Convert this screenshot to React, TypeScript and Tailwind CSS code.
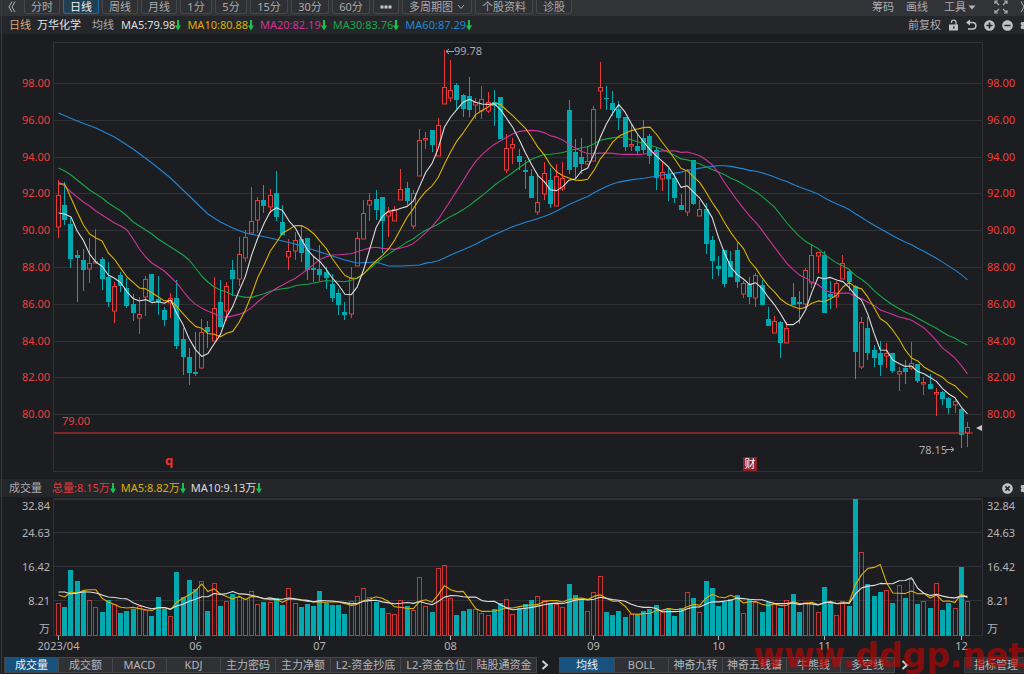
import type { ReactNode } from "react";
import { FaCog, FaPlusCircle, FaMinusCircle, FaTimesCircle } from "react-icons/fa";

type Candle = [kind: "r" | "t", high: number, top: number, bottom: number, low: number];

const FIRST_X = 58;
const STEP = 6.226;
const RED = "#e83a3a";
const TEAL = "#00a8b0";

const candles: Candle[] = [
  ["r", 180, 195, 227, 238], ["t", 182, 205, 220, 225], ["t", 218, 224, 259, 268], ["t", 250, 255, 258, 302],
  ["t", 249, 260, 270, 291], ["r", 238, 263, 269, 283], ["r", 229, 261, 263, 263], ["t", 257, 259, 279, 290],
  ["t", 262, 277, 302, 307], ["r", 282, 286, 311, 323], ["t", 272, 275, 286, 292], ["t", 278, 288, 306, 308],
  ["t", 294, 304, 313, 321], ["r", 297, 314, 318, 334], ["r", 276, 279, 297, 316], ["t", 274, 274, 301, 301],
  ["t", 276, 299, 302, 315], ["t", 307, 310, 320, 326], ["r", 293, 298, 303, 318], ["t", 280, 298, 346, 349],
  ["t", 328, 339, 357, 375], ["t", 348, 357, 373, 385], ["t", 332, 372, 374, 376], ["r", 319, 332, 368, 369],
  ["t", 321, 327, 332, 348], ["r", 277, 308, 341, 341], ["t", 280, 302, 327, 327], ["r", 282, 286, 311, 321],
  ["t", 260, 270, 279, 296], ["r", 237, 254, 279, 286], ["r", 230, 237, 258, 262], ["r", 187, 221, 233, 233],
  ["r", 197, 200, 220, 233], ["t", 185, 200, 206, 213], ["r", 189, 195, 207, 213], ["t", 171, 193, 217, 221],
  ["t", 205, 222, 235, 235], ["r", 239, 251, 257, 270], ["r", 232, 240, 251, 260], ["t", 226, 239, 253, 262],
  ["t", 238, 238, 270, 280], ["t", 256, 268, 270, 282], ["t", 245, 269, 275, 281], ["t", 267, 272, 278, 289],
  ["t", 274, 284, 298, 302], ["t", 289, 293, 305, 315], ["t", 302, 312, 315, 320], ["r", 267, 278, 314, 318],
  ["r", 232, 238, 266, 266], ["r", 200, 213, 239, 239], ["r", 193, 200, 205, 221], ["t", 190, 199, 210, 220],
  ["t", 197, 197, 221, 253], ["r", 207, 212, 216, 237], ["r", 206, 209, 221, 221], ["r", 169, 189, 200, 200],
  ["t", 182, 188, 201, 205], ["r", 190, 193, 226, 229], ["r", 129, 140, 176, 176], ["r", 132, 138, 140, 149],
  ["t", 130, 130, 145, 152], ["r", 118, 125, 156, 156], ["r", 50, 87, 104, 104], ["r", 60, 90, 98, 102],
  ["t", 83, 85, 100, 109], ["t", 94, 95, 109, 117], ["t", 77, 96, 110, 117], ["r", 98, 102, 105, 119],
  ["r", 86, 99, 111, 119], ["r", 92, 102, 111, 113], ["t", 90, 102, 106, 126], ["t", 97, 97, 139, 139],
  ["r", 134, 148, 170, 173], ["r", 138, 144, 148, 164], ["t", 149, 156, 162, 170], ["t", 160, 170, 172, 189],
  ["t", 169, 176, 198, 198], ["r", 175, 202, 212, 215], ["r", 162, 173, 194, 200], ["t", 168, 180, 204, 208],
  ["r", 164, 176, 206, 206], ["r", 162, 178, 189, 191], ["t", 100, 110, 170, 174], ["t", 139, 152, 167, 178],
  ["t", 138, 157, 164, 174], ["r", 146, 161, 164, 165], ["r", 106, 109, 161, 161], ["r", 62, 87, 91, 109],
  ["t", 86, 98, 99, 110], ["t", 91, 103, 110, 116], ["t", 101, 109, 118, 130], ["t", 117, 117, 147, 151],
  ["r", 125, 144, 146, 151], ["t", 135, 146, 151, 154], ["t", 120, 138, 150, 154], ["t", 134, 136, 156, 164],
  ["t", 147, 150, 178, 190], ["r", 162, 172, 179, 191], ["t", 168, 174, 179, 201], ["t", 173, 178, 198, 203],
  ["t", 194, 205, 210, 210], ["r", 169, 170, 212, 216], ["t", 160, 160, 204, 205], ["r", 200, 209, 216, 216],
  ["t", 203, 209, 244, 254], ["t", 236, 240, 261, 279], ["t", 256, 266, 269, 276], ["t", 250, 250, 284, 287],
  ["t", 251, 261, 277, 277], ["t", 242, 250, 282, 288], ["r", 281, 283, 294, 298], ["t", 277, 284, 297, 304],
  ["r", 273, 275, 298, 307], ["t", 280, 285, 305, 305], ["t", 307, 319, 326, 326], ["r", 316, 321, 333, 333],
  ["t", 321, 322, 343, 358], ["r", 322, 328, 343, 343], ["t", 283, 297, 305, 305], ["t", 291, 302, 304, 324],
  ["r", 268, 270, 304, 308], ["r", 244, 255, 283, 288], ["r", 252, 252, 256, 273], ["t", 251, 255, 313, 313],
  ["t", 281, 294, 297, 309], ["r", 281, 283, 297, 308], ["r", 255, 263, 279, 279], ["t", 269, 271, 282, 291],
  ["t", 285, 286, 352, 379], ["r", 317, 322, 367, 369], ["t", 317, 328, 353, 360], ["t", 345, 350, 358, 367],
  ["t", 341, 353, 365, 376], ["r", 343, 353, 356, 368], ["t", 353, 353, 371, 373], ["r", 367, 371, 374, 391],
  ["t", 360, 368, 372, 384], ["r", 342, 363, 368, 370], ["t", 364, 364, 381, 383], ["r", 377, 382, 384, 395],
  ["t", 374, 384, 389, 389], ["r", 388, 392, 394, 416], ["t", 391, 392, 399, 405], ["t", 397, 398, 408, 414],
  ["r", 398, 401, 405, 413], ["t", 408, 409, 435, 448], ["r", 422, 427, 433, 447],
];

const volumes: number[] = [
  603, 607, 570, 581, 591, 600, 607, 612, 600, 604, 613, 611, 609, 606, 610, 616, 597, 609, 616, 572, 597, 580, 589,
  581, 611, 583, 606, 601, 594, 597, 599, 591, 604, 602, 602, 598, 605, 588, 603, 607, 604, 606, 591, 603, 605, 605,
  614, 601, 596, 588, 597, 602, 608, 613, 614, 600, 606, 610, 577, 606, 612, 568, 565, 598, 615, 611, 609, 609, 613,
  615, 609, 603, 599, 614, 608, 604, 600, 596, 600, 603, 604, 607, 584, 595, 600, 611, 592, 576, 612, 615, 611, 617,
  614, 615, 611, 609, 605, 610, 608, 616, 608, 592, 598, 612, 581, 588, 606, 602, 599, 595, 613, 599, 602, 612, 602,
  604, 608, 600, 594, 612, 602, 603, 612, 587, 602, 615, 601, 606, 499, 552, 584, 596, 592, 590, 603, 585, 598, 579,
  604, 601, 608, 583, 610, 603, 608, 567, 601,
];

const closes = candles.map(([kind, , top, bottom]) => (kind === "r" ? top : bottom));
const xAt = (i: number) => FIRST_X + STEP * i;
const columnAt = (i: number) => Math.round(xAt(i)) + 0.5;

/** Moving average polyline; `lead` gives [index, y] anchors for the days before a full window exists. */
function averageLine(values: number[], size: number, lead: [number, number][]) {
  const points = lead.map(([i, y]) => `${(xAt(i) + 0.5).toFixed(1)},${y}`);
  for (let i = size - 1; i < values.length; i++) {
    const sum = values.slice(i - size + 1, i + 1).reduce((a, b) => a + b, 0);
    points.push(`${(xAt(i) + 0.5).toFixed(1)},${(sum / size).toFixed(1)}`);
  }
  return points.join(" ");
}

const indexed = (ys: number[]) => ys.map((y, i): [number, number] => [i, y]);

const priceLines = [
  {
    color: "#1f87d8",
    points: averageLine(closes, 60, [
      [0, 113], [3, 121], [6, 128], [9, 137], [12, 149], [15, 163], [18, 178], [20, 190], [22, 202], [24, 214],
      [26, 222], [28, 228], [30, 233], [34, 238], [38, 244], [42, 252], [46, 260], [48, 263], [51, 262], [53, 266],
      [55, 266], [58, 265],
    ]),
  },
  {
    color: "#14a849",
    points: averageLine(closes, 30, indexed([
      168, 171, 175, 180, 185, 190, 194, 198, 203, 207, 211, 216, 222, 226, 230, 234, 239, 243, 247, 251, 255, 260,
      268, 276, 282, 287, 290, 292, 295,
    ])),
  },
  {
    color: "#cf3399",
    points: averageLine(closes, 20, indexed([
      182, 186, 192, 197, 202, 206, 211, 215, 219, 223, 226, 230, 239, 249, 257, 263, 267, 271, 277,
    ])),
  },
  { color: "#dcb000", points: averageLine(closes, 10, indexed([184, 184, 198, 212, 225, 234, 238, 241, 253])) },
  { color: "#dedede", points: averageLine(closes, 5, indexed([213, 214, 217, 231])) },
];

const volumeLines = [
  { color: "#dcb000", points: averageLine(volumes, 5, indexed([595, 597, 592, 593])) },
  { color: "#dedede", points: averageLine(volumes, 10, indexed([592, 592, 594, 593, 592, 592, 593, 595, 597])) },
];

const priceTicks = [98, 96, 94, 92, 90, 88, 86, 84, 82, 80].map((value, i) => ({
  label: `${value}.00`,
  y: Math.round(83 + i * 36.8),
}));

const volumeTicks = [
  { label: "32.84", line: 499, text: 506 },
  { label: "24.63", line: 533, text: 533 },
  { label: "16.42", line: 567, text: 567 },
  { label: "8.21", line: 601, text: 601 },
];

const months = [
  { label: "2023/04", i: 0 }, { label: "06", i: 22 }, { label: "07", i: 42 }, { label: "08", i: 63 },
  { label: "09", i: 86 }, { label: "10", i: 106 }, { label: "11", i: 123 }, { label: "12", i: 145 },
];

const periods = [
  { name: "分时", width: "w-9" }, { name: "日线", width: "w-9" }, { name: "周线", width: "w-9" },
  { name: "月线", width: "w-9" }, { name: "1分", width: "w-8" }, { name: "5分", width: "w-8" },
  { name: "15分", width: "w-[38px]" }, { name: "30分", width: "w-[38px]" }, { name: "60分", width: "w-[38px]" },
];

const averages = [
  { text: "MA5:79.98", color: "text-[#dedede]" },
  { text: "MA10:80.88", color: "text-[#dcb000]" },
  { text: "MA20:82.19", color: "text-[#cf3399]" },
  { text: "MA30:83.76", color: "text-[#14a849]" },
  { text: "MA60:87.29", color: "text-[#1f87d8]" },
];

const subIndicators = [
  { name: "成交量", width: "w-[53px]" }, { name: "成交额", width: "w-[53px]" }, { name: "MACD", width: "w-[53px]" },
  { name: "KDJ", width: "w-[53px]" }, { name: "主力密码", width: "w-[54px]" }, { name: "主力净额", width: "w-[54px]" },
  { name: "L2-资金抄底", width: "w-[69px]" }, { name: "L2-资金仓位", width: "w-[70px]" },
  { name: "陆股通资金", width: "w-[64px]" },
];

const mainIndicators = [
  { name: "均线", width: "w-[54px]" }, { name: "BOLL", width: "w-[53px]" }, { name: "神奇九转", width: "w-[53px]" },
  { name: "神奇五线谱", width: "w-[63px]" }, { name: "牛熊线", width: "w-[53px]" }, { name: "多空线", width: "w-[53px]" },
];

function Reading({ color, children }: { color: string; children: ReactNode }) {
  return (
    <span className={`flex items-center whitespace-nowrap ${color}`}>
      {children}
      <svg viewBox="0 0 6 12" className="h-3 w-1.5 shrink-0 text-[#19c24f]" aria-hidden="true">
        <path d="M2 1h2v5.500h2L3 11.500 0 6.500h2z" fill="currentColor" />
      </svg>
    </span>
  );
}

function PeriodButton({ width, active, label, children }: { width: string; active?: boolean; label?: string; children: ReactNode }) {
  const tone = active ? "border-[#1f6fa6] bg-[#213f54] text-[#f0f0f0]" : "border-[#46474b] bg-[#2f3034] text-[#a9aaad]";
  return (
    <button
      type="button"
      aria-label={label}
      className={`flex h-3.5 shrink-0 items-center justify-center gap-1 whitespace-nowrap rounded-b-[3px] border border-t-0 leading-3 ${width} ${tone}`}
    >
      {children}
    </button>
  );
}

function IndicatorTabs({ tabs }: { tabs: { name: string; width: string }[] }) {
  return (
    <div className="flex shrink-0 gap-px border border-[#46474b] bg-[#46474b]">
      {tabs.map((tab, i) => (
        <button
          key={tab.name}
          type="button"
          className={`h-3.5 shrink-0 whitespace-nowrap text-center leading-[14px] ${tab.width} ${
            i === 0 ? "bg-[#17527f] text-[#f0f0f0]" : "bg-[#303135] text-[#b4b5b8]"
          }`}
        >
          {tab.name}
        </button>
      ))}
    </div>
  );
}

function NextButton({ className }: { className: string }) {
  return (
    <button type="button" aria-label="更多指标" className={`shrink-0 ${className}`}>
      <svg viewBox="0 0 8 10" className="h-2.5 w-2" aria-hidden="true">
        <path d="M1.500 1L6 5L1.500 9" fill="none" stroke="#d0d1d3" strokeWidth="2" />
      </svg>
    </button>
  );
}

function Lines({ lines }: { lines: { color: string; points: string }[] }) {
  return (
    <g fill="none" strokeWidth="1.100" strokeLinejoin="round">
      {lines.map((line) => (
        <polyline key={line.color} points={line.points} stroke={line.color} />
      ))}
    </g>
  );
}

function PriceChart() {
  return (
    <svg viewBox="0 34 1024 445" className="block h-auto w-full" role="img" aria-label="K线图">
      <g stroke="#303135" fill="none">
        <path d="M53.500 42.500H982.500V471.500H53.500Z" />
        {priceTicks.map((tick) => (
          <path key={tick.label} d={`M53.500 ${tick.y + 0.5}H982.500`} />
        ))}
      </g>
      <g fontSize="11" fill="#f03c3c">
        {priceTicks.map((tick) => (
          <g key={tick.label}>
            <text x="50" y={tick.y + 4} textAnchor="end">{tick.label}</text>
            <text x="987" y={tick.y + 4}>{tick.label}</text>
          </g>
        ))}
        <text x="62" y="425">79.00</text>
      </g>
      {candles.map(([kind, high, top, bottom, low], i) => {
        const x = columnAt(i);
        return kind === "r" ? (
          <g key={i} stroke={RED} fill="none">
            <path d={`M${x} ${high}V${top}M${x} ${bottom}V${low}`} />
            <rect x={x - 2} y={top + 0.5} width="4" height={Math.max(bottom - top - 0.5, 1)} />
          </g>
        ) : (
          <g key={i} fill={TEAL}>
            <path d={`M${x} ${high}V${low}`} stroke={TEAL} />
            <rect x={x - 2.5} y={top} width="5" height={Math.max(bottom - top, 1)} />
          </g>
        );
      })}
      <Lines lines={priceLines} />
      <path d="M54 433H973" stroke="#dc3030" />
      <path d="M976 428L982 425V431Z" fill="#c8c8c8" />
      <g fontSize="11" fill="#a9aaad">
        <path d="M446 51.500H454M449 49L446 51.500L449 54" fill="none" stroke="#a9aaad" />
        <text x="454" y="55">99.78</text>
        <text x="919" y="454">78.15</text>
        <path d="M946 449.500H954M951 447L954 449.500L951 452" fill="none" stroke="#a9aaad" />
      </g>
      <text x="169" y="465" fontSize="13" fontWeight="700" fill="#ef2f2f" textAnchor="middle">q</text>
      <rect x="743" y="457" width="14" height="14" fill="#8c2026" />
      <text x="750" y="468" fontSize="11" fill="#ffffff" textAnchor="middle">财</text>
    </svg>
  );
}

function VolumeChart() {
  return (
    <svg viewBox="0 497 1024 158" className="block h-auto w-full" role="img" aria-label="成交量图">
      <g stroke="#303135" fill="none">
        <path d="M53.500 499.500H982.500V635.500H53.500Z" />
        {volumeTicks.map((tick) => (
          <path key={tick.label} d={`M53.500 ${tick.line - 0.5}H982.500`} />
        ))}
      </g>
      <g fontSize="11" fill="#b4b5b8">
        {volumeTicks.map((tick) => (
          <g key={tick.label}>
            <text x="50" y={tick.text + 4} textAnchor="end">{tick.label}</text>
            <text x="987" y={tick.text + 4}>{tick.label}</text>
          </g>
        ))}
        <text x="50" y="633" textAnchor="end">万</text>
        <text x="987" y="633">万</text>
        {months.map((month) => (
          <g key={month.label}>
            <path d={`M${columnAt(month.i)} 636V640`} stroke="#b4b5b8" />
            <text x={columnAt(month.i)} y="650" textAnchor="middle">{month.label}</text>
          </g>
        ))}
      </g>
      {volumes.map((top, i) => {
        const x = columnAt(i);
        return candles[i][0] === "r" ? (
          <rect key={i} x={x - 2} y={top + 0.5} width="4" height={635 - top} fill="none" stroke={RED} strokeOpacity="0.85" />
        ) : (
          <rect key={i} x={x - 2.5} y={top} width="5" height={636 - top} fill={TEAL} />
        );
      })}
      <Lines lines={volumeLines} />
    </svg>
  );
}

function Toolbar() {
  return (
    <nav className="flex h-4 items-start overflow-hidden bg-[#323337] text-[#a9aaad]" aria-label="周期">
      <button type="button" aria-label="收起" className="ml-2 mr-2 h-3.5 w-2 shrink-0">
        <svg viewBox="0 0 8 14" className="h-3.5 w-2" aria-hidden="true">
          <path d="M4 1.500L1 7L4 12M7 1.500L4 7L7 12" fill="none" stroke="#b4b5b8" />
        </svg>
      </button>
      <div className="flex gap-[3px]">
        {periods.map((period) => (
          <PeriodButton key={period.name} width={period.width} active={period.name === "日线"}>
            {period.name}
          </PeriodButton>
        ))}
        <PeriodButton width="w-[26px]" label="更多周期">
          <svg viewBox="0 0 12 4" className="h-1 w-3" fill="#c8c9cb" aria-hidden="true">
            <rect x="0.500" y="0.500" width="3" height="3" />
            <rect x="4.500" y="0.500" width="3" height="3" />
            <rect x="8.500" y="0.500" width="3" height="3" />
          </svg>
        </PeriodButton>
        <PeriodButton width="w-[70px]">
          多周期图
          <svg viewBox="0 0 8 6" className="h-1.5 w-2" aria-hidden="true">
            <path d="M1 1L4 4.500L7 1" fill="none" stroke="#a9aaad" />
          </svg>
        </PeriodButton>
        <PeriodButton width="w-[58px]">个股资料</PeriodButton>
        <PeriodButton width="w-9">诊股</PeriodButton>
      </div>
      <div className="ml-auto flex h-3.5 shrink-0 items-center leading-3">
        <button type="button" className="mr-3">筹码</button>
        <button type="button" className="mr-4">画线</button>
        <button type="button" className="mr-[18px] flex items-center gap-0.5">
          工具
          <svg viewBox="0 0 8 5" className="h-[5px] w-2" aria-hidden="true">
            <path d="M0.500 0.500H7.500L4 4.500Z" fill="#b4b5b8" />
          </svg>
        </button>
        <button type="button" aria-label="全屏" className="mr-3">
          <svg viewBox="0 0 14 14" className="h-3.5 w-3.5" fill="none" stroke="#a9aaad" strokeWidth="1.200" aria-hidden="true">
            <path d="M1 4V1H4M1 1L5 5M10 1H13V4M13 1L9 5M1 10V13H4M1 13L5 9M13 10V13H10M13 13L9 9" />
          </svg>
        </button>
        <button type="button" aria-label="展开" className="-mr-1 h-3.5 w-2">
          <svg viewBox="0 0 8 14" className="h-3.5 w-2" aria-hidden="true">
            <path d="M1 1.500L4 7L1 12M4 1.500L7 7L4 12" fill="none" stroke="#b4b5b8" />
          </svg>
        </button>
      </div>
    </nav>
  );
}

export default function App() {
  return (
    <div className="relative w-full overflow-hidden bg-[#1c1d20] font-['Noto_Sans','Noto_Sans_CJK_SC',sans-serif] text-[11px] leading-4 text-[#b4b5b8]">
      <Toolbar />
      <header className="flex h-[18px] items-center overflow-hidden bg-[#25262a] pl-[9px]">
        <span className="mr-1.5 text-[#d3a679]">日线</span>
        <h1 className="mr-[11px] text-[#e6e6e6]">万华化学</h1>
        <span className="mr-[7px] text-[#a9aaad]">均线</span>
        <div className="flex gap-1.5">
          {averages.map((average) => (
            <Reading key={average.text} color={average.color}>{average.text}</Reading>
          ))}
        </div>
        <div className="ml-auto flex shrink-0 items-center gap-[7px] text-[#c0c1c3]">
          <button type="button" className="text-[#a9aaad]">前复权</button>
          <button type="button" aria-label="锁定">
            <svg viewBox="0 0 11 12" className="h-3 w-[11px]" aria-hidden="true">
              <path d="M3.500 4V3C3.500 0.500 8 0.500 8 3V6" fill="none" stroke="currentColor" strokeWidth="1.300" />
              <path d="M1 5.500H10V11.500H1Z" fill="currentColor" />
              <path d="M5 7.500H6.500V9.500H5Z" fill="#25262a" />
            </svg>
          </button>
          <button type="button" aria-label="撤销">
            <svg viewBox="0 0 11 12" className="h-3 w-[11px]" aria-hidden="true">
              <path d="M1.500 3.500H6.500C11 3.500 11 10 6.500 10H2" fill="none" stroke="currentColor" strokeWidth="1.500" />
              <path d="M0 3.500L4 0.500V6.500Z" fill="currentColor" />
            </svg>
          </button>
          <button type="button" aria-label="放大"><FaPlusCircle size={11} /></button>
          <button type="button" aria-label="缩小"><FaMinusCircle size={11} /></button>
          <button type="button" aria-label="设置" className="-mr-[7px]"><FaCog size={11} /></button>
        </div>
      </header>
      <PriceChart />
      <div className="flex h-[18px] items-center overflow-hidden bg-[#25262a] pl-[9px]">
        <h2 className="mr-2.5 text-[#a9aaad]">成交量</h2>
        <div className="flex gap-[5px]">
          <Reading color="text-[#e83a3a]">总量:8.15万</Reading>
          <Reading color="text-[#dcb000]">MA5:8.82万</Reading>
          <Reading color="text-[#dedede]">MA10:9.13万</Reading>
        </div>
        <div className="ml-auto flex shrink-0 items-center gap-[7px] text-[#c0c1c3]">
          <button type="button" aria-label="关闭"><FaTimesCircle size={11} /></button>
          <button type="button" aria-label="设置" className="-mr-[7px]"><FaCog size={11} /></button>
        </div>
      </div>
      <VolumeChart />
      <div className="flex h-[19px] items-center overflow-hidden pl-1">
        <IndicatorTabs tabs={subIndicators} />
        <NextButton className="ml-1 mr-2.5" />
        <IndicatorTabs tabs={mainIndicators} />
        <NextButton className="ml-1.5" />
        <button type="button" className="-mr-1 ml-auto h-4 w-16 shrink-0 border border-[#3a3b3f] bg-[#303135] text-center leading-[14px]">
          指标管理
        </button>
      </div>
      <span className="pointer-events-none absolute inset-y-0 left-px w-px bg-[#3a3b3f]" />
      <span className="pointer-events-none absolute bottom-0 right-0 whitespace-nowrap font-['DejaVu_Sans',sans-serif] text-[33px] font-bold leading-9 text-[#c80000]/60">
        www.ddgp.net
      </span>
    </div>
  );
}
